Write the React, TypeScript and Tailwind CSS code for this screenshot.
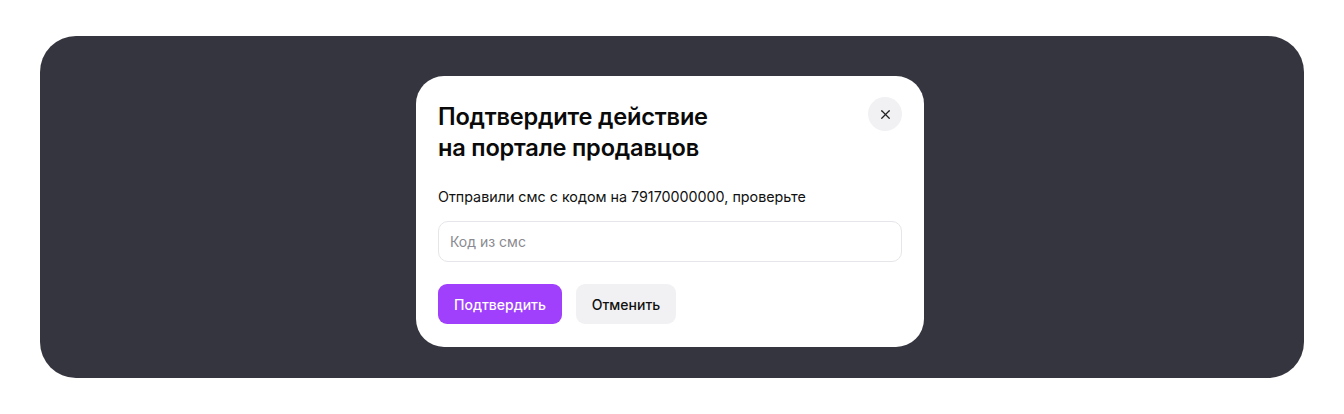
import { X } from 'lucide-react'

export default function App() {
  return (
    <div className="h-[414px] w-[1344px] bg-white px-[40px] py-[36px] font-['Inter',sans-serif]">
      <div className="flex h-full w-full justify-center rounded-[36px] bg-[#35353f] pr-[4px] pt-[40px]">
        {/* Modal */}
        <div className="relative h-[271px] w-[508px] rounded-[28px] bg-white px-[22px] pt-[25px]">
          <button
            type="button"
            className="absolute right-[22px] top-[21px] flex size-[34px] items-center justify-center rounded-full bg-[#f1f1f3] text-[#222]"
          >
            <X className="size-[15px]" strokeWidth={2} />
          </button>

          <h2 className="text-[23.6px] font-semibold leading-[31px] tracking-[-0.2px] text-[#0a0a0a]">
            Подтвердите действие
            <br />
            на портале продавцов
          </h2>

          <p className="mt-[24px] text-[14.3px] leading-[20px] text-[#111]">
            Отправили смс с кодом на 79170000000, проверьте
          </p>

          <input
            type="text"
            placeholder="Код из смс"
            className="mt-[14px] h-[41px] w-full rounded-[10px] border border-[#e6e6ea] px-[11px] text-[14px] text-[#111] outline-none placeholder:text-[#8a8a90]"
          />

          <div className="mt-[22px] flex gap-[14px]">
            <button
              type="button"
              className="h-[40px] w-[124px] rounded-[9px] bg-[#a03ffc] text-[14px] font-medium text-white"
            >
              Подтвердить
            </button>
            <button
              type="button"
              className="h-[40px] w-[100px] rounded-[9px] bg-[#f1f1f3] text-[14px] font-medium text-[#111]"
            >
              Отменить
            </button>
          </div>
        </div>
      </div>
    </div>
  )
}
